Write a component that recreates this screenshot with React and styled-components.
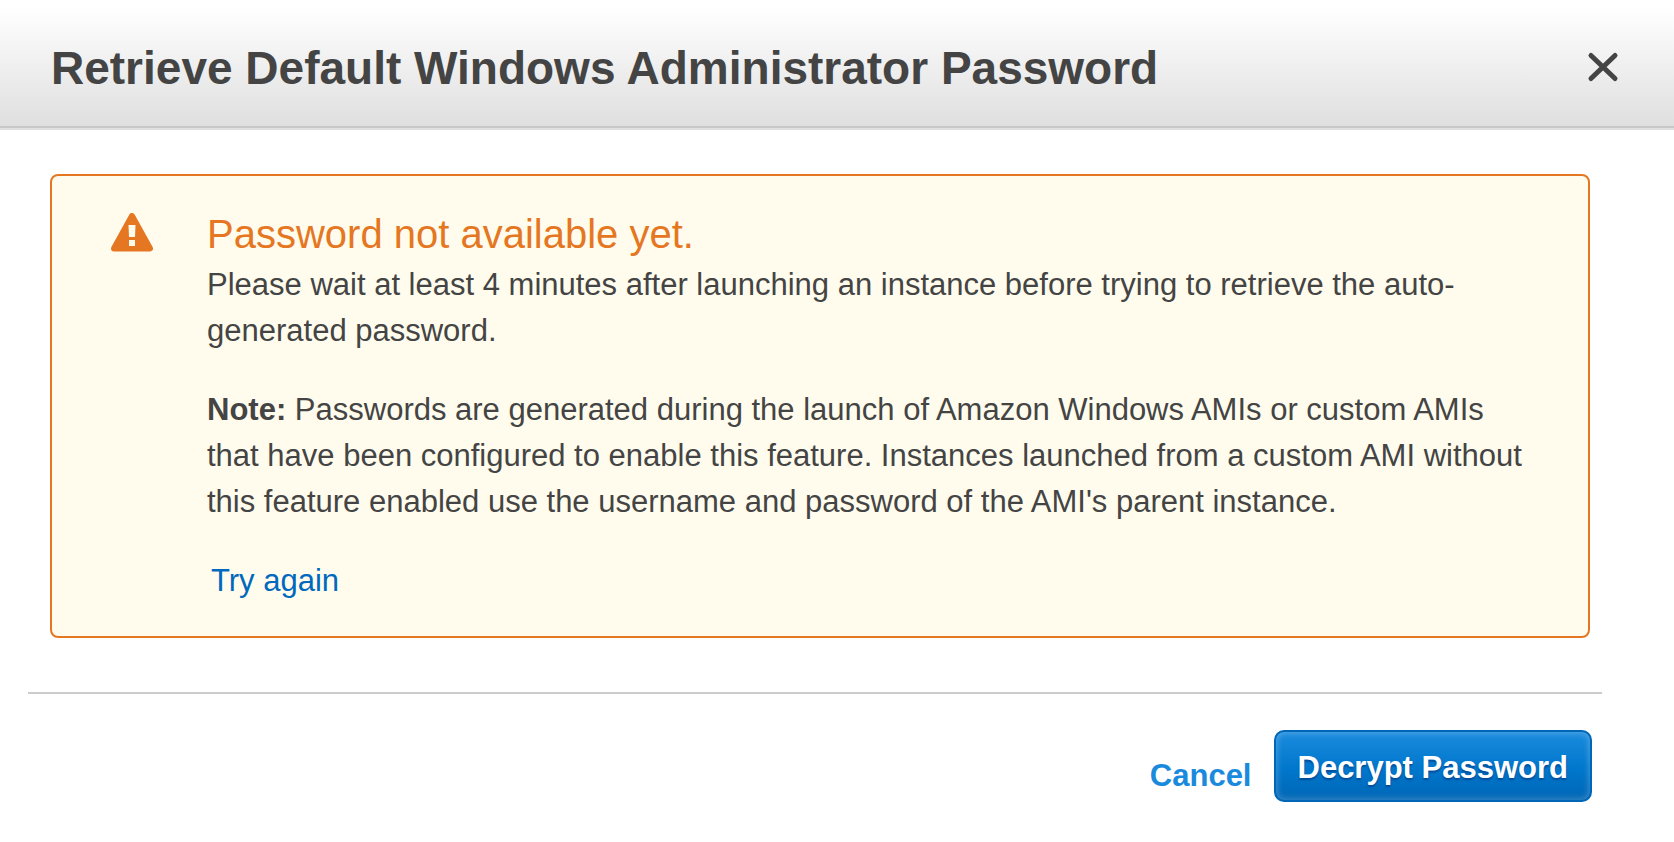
import React from "react";
import styled, { createGlobalStyle } from "styled-components";

const Global = createGlobalStyle`
  *, *::before, *::after { box-sizing: border-box; }
  body {
    margin: 0;
    background: #fff;
    color: #444;
    font-family: "Liberation Sans", Arial, sans-serif;
    font-size: 31px;
    line-height: 46px;
  }
`;

const Header = styled.header`
  display: flex;
  align-items: center;
  justify-content: space-between;
  height: 128px;
  padding: 10px 54px 0 51px;
  background: linear-gradient(#fff 6%, #dfdfdf);
  border-bottom: 2px solid #c8c8c8;
  box-shadow: 0 2px 0 #e0e0e0;
`;

const Title = styled.h1`
  margin: 0;
  font-size: 46px;
  line-height: 56px;
  white-space: nowrap;
`;

const CloseButton = styled.button`
  display: flex;
  padding: 0;
  border: 0;
  background: none;
  color: #444;
  cursor: pointer;
`;

const Alert = styled.section`
  display: flex;
  gap: 52px;
  margin: 46px 84px 0 50px;
  padding: 34px 56px 32px 59px;
  border: 2px solid #e57723;
  border-radius: 8px;
  background: #fffced;
`;

const WarningIcon = styled.svg`
  flex: none;
  margin-top: 3px;
`;

const AlertBody = styled.div`
  flex: 1;
  min-width: 0;
`;

const AlertTitle = styled.h2`
  margin: 0 0 4px;
  color: #e57723;
  font-size: 40px;
  font-weight: 400;
  line-height: 48px;
`;

const Text = styled.p`
  margin: 0 0 33px;
`;

const RetryLink = styled.a`
  margin-left: 4px;
  color: #0069bd;
  text-decoration: none;
`;

const Footer = styled.footer`
  display: flex;
  align-items: center;
  justify-content: flex-end;
  gap: 22px;
  margin: 54px 72px 0 28px;
  padding: 36px 10px 0 0;
  border-top: 2px solid #ccc;
`;

const CancelButton = styled.button`
  padding: 20px 0 0;
  border: 0;
  background: none;
  color: #1a8add;
  font: bold 31px/46px "Liberation Sans", Arial, sans-serif;
  cursor: pointer;
`;

const PrimaryButton = styled.button`
  height: 72px;
  padding: 4px 22px 0;
  border: 2px solid #0067b8;
  border-radius: 10px;
  background: linear-gradient(#1b8bdd, #0077cc 55%, #0066b5);
  box-shadow: inset 0 0 6px 1px rgba(255, 255, 255, 0.25);
  color: #fff;
  font: bold 31px/46px "Liberation Sans", Arial, sans-serif;
  text-shadow: 0 2px 2px #004b97;
  cursor: pointer;
`;

export default function App() {
  return (
    <main role="dialog" aria-labelledby="dialog-title">
      <Global />
      <Header>
        <Title id="dialog-title">Retrieve Default Windows Administrator Password</Title>
        <CloseButton type="button" aria-label="Close">
          <svg width="34" height="34" viewBox="0 0 34 34" fill="none" stroke="currentColor" strokeWidth="5" strokeLinecap="round">
            <path d="M5 4.5L29 27.5M29 4.5L5 27.5" />
          </svg>
        </CloseButton>
      </Header>
      <Alert>
        <WarningIcon width="44" height="42" viewBox="0 0 44 42" aria-hidden="true">
          <path d="M21 3L39 35.5H3Z" fill="#e57723" stroke="#e57723" strokeWidth="6" strokeLinejoin="round" />
          <path d="M17.5 12H24.5L24 24H18ZM18 27H24V33H18Z" fill="#fffced" />
        </WarningIcon>
        <AlertBody>
          <AlertTitle>Password not available yet.</AlertTitle>
          <Text>
            Please wait at least 4 minutes after launching an instance before trying to retrieve the auto-generated password.
          </Text>
          <Text>
            <strong>Note:</strong> Passwords are generated during the launch of Amazon Windows AMIs or custom AMIs that have been configured to enable this feature. Instances launched from a custom AMI without this feature enabled use the username and password of the AMI's parent instance.
          </Text>
          <RetryLink href="#retry">Try again</RetryLink>
        </AlertBody>
      </Alert>
      <Footer>
        <CancelButton type="button">Cancel</CancelButton>
        <PrimaryButton type="button">Decrypt Password</PrimaryButton>
      </Footer>
    </main>
  );
}
